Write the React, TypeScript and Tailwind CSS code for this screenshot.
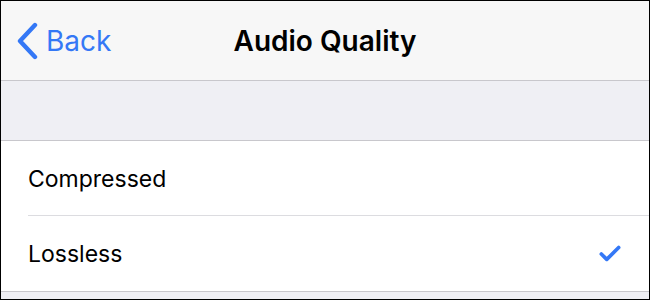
import { Check } from 'lucide-react';

const OPTIONS = [
  { label: 'Compressed', selected: false },
  { label: 'Lossless', selected: true },
];

export default function App() {
  return (
    <div className="h-[300px] w-[650px] overflow-hidden border border-black bg-[#efeff4] font-['Inter',sans-serif]">
      {/* nav bar */}
      <div className="relative flex h-[80px] items-center border-b border-[#c8c7cc] bg-[#f7f7f7]">
        <div className="flex items-center pl-[14px] text-[#3478f6]">
          <svg width="24" height="38" viewBox="0 0 24 38" fill="none" aria-hidden>
            <path d="M20 3 L5 19 L20 35" stroke="currentColor" strokeWidth="4.4" strokeLinecap="round" strokeLinejoin="round" />
          </svg>
          <span className="ml-[7px] text-[28px] leading-none">Back</span>
        </div>
        <div className="absolute inset-x-0 text-center text-[28px] font-semibold leading-none text-black">Audio Quality</div>
      </div>

      <div className="h-[59px]" />

      {/* options */}
      <div className="border-y border-[#c8c7cc] bg-white">
        {OPTIONS.map((opt, i) => (
          <div key={opt.label} className="pl-[27px]">
            <div
              className={
                'flex h-[75px] items-center pr-[26px] ' + (i < OPTIONS.length - 1 ? 'border-b border-[#dcdce0]' : '')
              }
            >
              <span className="flex-1 pt-[2px] text-[23px] leading-none text-black">{opt.label}</span>
              {opt.selected && <Check className="h-[26px] w-[26px] text-[#3478f6]" strokeWidth={3.4} />}
            </div>
          </div>
        ))}
      </div>
    </div>
  );
}
